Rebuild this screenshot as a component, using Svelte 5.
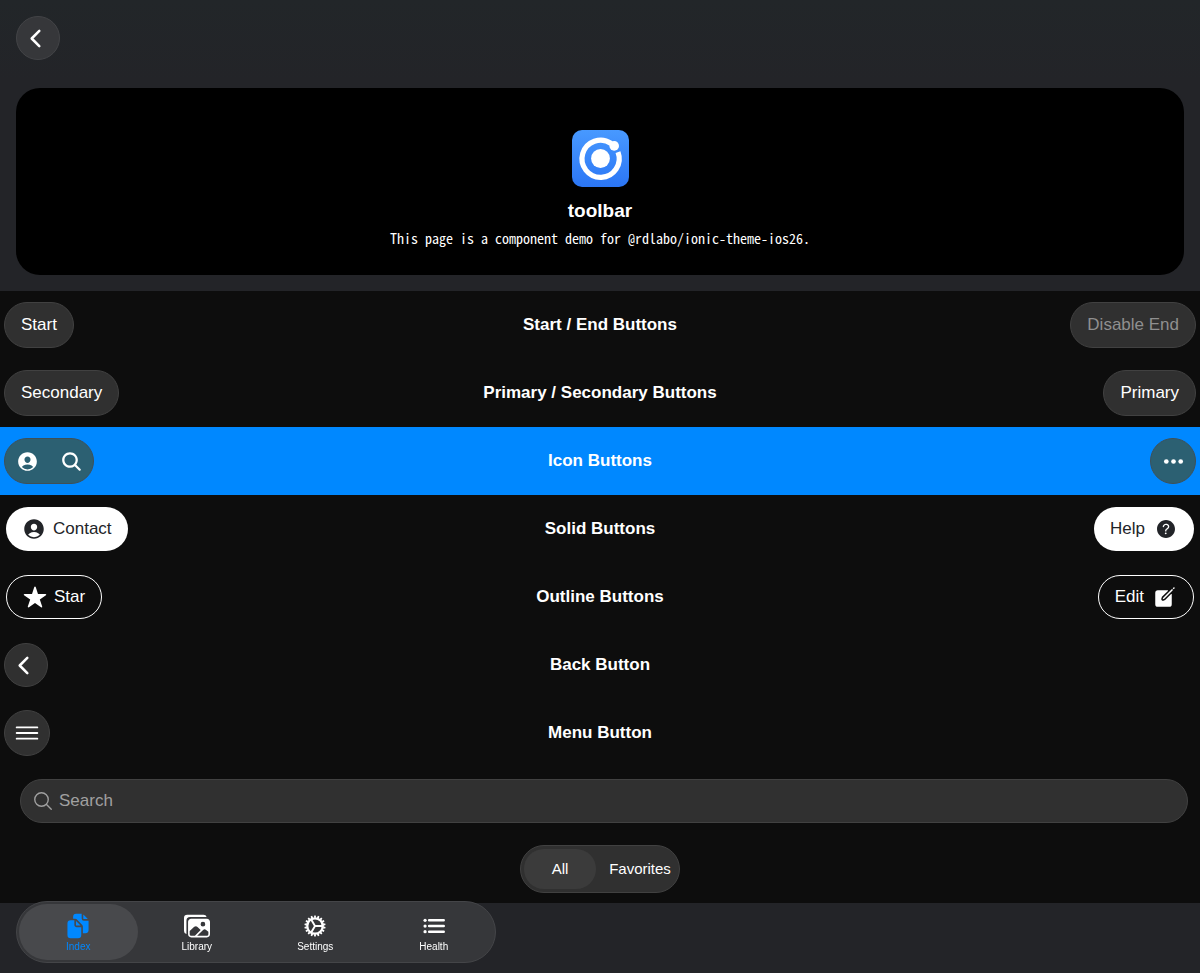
<script>
  let tab = $state('Index');
  let segment = $state('All');
  let query = $state('');

  const tabs = ['Index', 'Library', 'Settings', 'Health'];
  const segments = ['All', 'Favorites'];
  const teeth = Array.from({ length: 18 }, (_, i) => i * 20);
</script>

{#snippet icon(name)}
  <svg class="icon {name}" viewBox="0 0 512 512" aria-hidden="true">
    {#if name === 'back'}
      <path class="line bold" d="M328 112L184 256l144 144" />
    {:else if name === 'person'}
      <path d="M256 48C141.31 48 48 141.31 48 256s93.31 208 208 208 208-93.31 208-208S370.69 48 256 48zm-50.22 116.82C218.45 151.39 236.28 144 256 144s37.39 7.44 50.11 20.94c12.89 13.68 19.16 32.06 17.68 51.82C320.83 256 290.43 288 256 288s-64.89-32-67.79-71.25c-1.47-19.92 4.79-38.36 17.57-51.93zM256 432a175.49 175.49 0 01-126-53.22 122.91 122.91 0 0135.14-33.44C190.63 329 222.89 320 256 320s65.37 9 90.83 25.34A122.87 122.87 0 01382 378.78 175.45 175.45 0 01256 432z" />
    {:else if name === 'search'}
      <path d="M456.69 421.39L362.6 327.3a173.81 173.81 0 0034.84-104.58C397.44 126.38 319.06 48 222.72 48S48 126.38 48 222.72s78.38 174.72 174.72 174.72A173.81 173.81 0 00327.3 362.6l94.09 94.09a25 25 0 0035.3-35.3zM97.92 222.72a124.8 124.8 0 11124.8 124.8 124.95 124.95 0 01-124.8-124.8z" />
    {:else if name === 'search-outline'}
      <path class="line" d="M221.09 64a157.09 157.09 0 10157.09 157.09A157.1 157.1 0 00221.09 64zM338.29 338.29L448 448" />
    {:else if name === 'ellipsis'}
      <circle cx="96" cy="256" r="52" /><circle cx="256" cy="256" r="52" /><circle cx="416" cy="256" r="52" />
    {:else if name === 'help'}
      <path d="M256 64C150 64 64 150 64 256s86 192 192 192 192-86 192-192S362 64 256 64zm-6 304a20 20 0 1120-20 20 20 0 01-20 20zm33.44-102C267.23 276.88 265 286.85 265 296a14 14 0 01-28 0c0-21.91 10.08-39.33 30.82-53.26C287.1 229.8 298 221.6 298 203.57c0-12.26-7-21.57-21.49-28.46-3.41-1.62-11-3.2-20.34-3.09-11.72.15-20.82 2.95-27.83 8.59C215.12 191.25 214 202.83 214 203a14 14 0 11-28-1.35c.11-2.43 1.8-24.32 24.77-42.8 11.91-9.58 27.06-14.56 45-14.78 12.7-.15 24.63 2 32.72 5.82C312.7 161.34 326 180.43 326 203.57c0 33.83-22.61 49.02-42.56 62.43z" />
    {:else if name === 'star'}
      <path d="M394 480a16 16 0 01-9.39-3L256 383.76 127.39 477a16 16 0 01-24.55-18.08L153 310.35 23 221.2a16 16 0 019-29.2h160.38l48.4-148.95a16 16 0 0130.44 0l48.4 149H480a16 16 0 019.05 29.2L359 310.35l50.13 148.53A16 16 0 01394 480z" />
    {:else if name === 'create'}
      <path d="M459.94 53.25a16.06 16.06 0 00-23.22-.56L424.35 65a8 8 0 000 11.31l11.34 11.32a8 8 0 0011.34 0l12.06-12c6.1-6.09 6.67-16.01.85-22.38zM399.34 90L218.82 270.2a9 9 0 00-2.31 3.93L208.16 299a3.91 3.91 0 004.86 4.86l24.85-8.35a9 9 0 003.93-2.31L422 112.66a9 9 0 000-12.66l-9.95-10a9 9 0 00-12.71 0z" />
      <path d="M386.34 193.66L264.45 315.79A41.08 41.08 0 01247.58 326l-25.9 8.67a35.92 35.92 0 01-44.33-44.33l8.67-25.9a41.08 41.08 0 0110.19-16.87l122.13-121.91a8 8 0 00-5.65-13.66H104a56 56 0 00-56 56v240a56 56 0 0056 56h240a56 56 0 0056-56V199.31a8 8 0 00-13.66-5.65z" />
    {:else if name === 'menu'}
      <path class="line" d="M80 160h352M80 256h352M80 352h352" />
    {:else if name === 'Index'}
      <path d="M298.39 248a4 4 0 002.86-6.8l-78.4-79.72a4 4 0 00-6.85 2.81V236a12 12 0 0012 12z" />
      <path d="M197 267a43.67 43.67 0 01-13-31v-92h-72a64.19 64.19 0 00-64 64v224a64 64 0 0064 64h144a64 64 0 0064-64V280h-92a43.61 43.61 0 01-31-13zM372 120h70.39a4 4 0 002.86-6.8l-78.4-79.72a4 4 0 00-6.85 2.81V108a12 12 0 0012 12z" />
      <path d="M372 152a44.34 44.34 0 01-44-44V16H220a60.07 60.07 0 00-60 60v36h42.12A40.81 40.81 0 01231 124.14l109.16 111a41.11 41.11 0 0111.83 29V400h53.05c32.51 0 58.95-26.92 58.95-60V152z" />
    {:else if name === 'Library'}
      <path d="M450.29 112H142c-34 0-62 27.51-62 61.33v245.34c0 33.82 28 61.33 62 61.33h308c34 0 62-26.18 62-60V173.33c0-33.82-27.68-61.33-61.71-61.33zm-77.15 61.34a46 46 0 11-46.28 46 46.19 46.19 0 0146.28-46.01zm-231.55 276c-17 0-29.86-13.75-29.86-30.66v-64.83l90.46-80.79a46.54 46.54 0 0163.44 1.83L328.27 337l-113 112.33zM480 418.67a30.67 30.67 0 01-30.71 30.66H259L376.08 333a46.24 46.24 0 0159.44-.16L480 370.59z" />
      <path d="M384 32H64A64 64 0 000 96v256a64.11 64.11 0 0048 62V152a72 72 0 0172-72h326a64.11 64.11 0 00-62-48z" />
    {:else if name === 'Settings'}
      <circle class="rim" cx="256" cy="256" r="152" />
      {#each teeth as angle}
        <path class="tooth" d="M241 48h30l7 46h-44z" transform="rotate({angle} 256 256)" />
      {/each}
      <path class="spokes" d="M256 256h150M256 256L181 126M256 256L181 386" />
    {:else if name === 'Health'}
      <path class="line bold" d="M160 144h288M160 256h288M160 368h288" />
      <circle cx="80" cy="144" r="32" /><circle cx="80" cy="256" r="32" /><circle cx="80" cy="368" r="32" />
    {/if}
  </svg>
{/snippet}

<div class="page">
  <header>
    <button class="glass round" aria-label="Back">{@render icon('back')}</button>
    <section class="card">
      <svg class="logo" viewBox="0 0 57 57" aria-hidden="true">
        <defs>
          <linearGradient id="logo-fill" x1="0" y1="0" x2="0" y2="1">
            <stop offset="0" stop-color="#4899ff" />
            <stop offset="1" stop-color="#2b76f5" />
          </linearGradient>
        </defs>
        <rect width="57" height="57" rx="10" fill="url(#logo-fill)" />
        <circle cx="28.5" cy="28.5" r="9.4" fill="#fff" />
        <path d="M39.2 13.5A18.6 18.6 0 1 0 46 22.2" fill="none" stroke="#fff" stroke-width="5.2" />
        <circle cx="42.2" cy="15.9" r="4.8" fill="#fff" />
      </svg>
      <h1>toolbar</h1>
      <p>This page is a component demo for @rdlabo/ionic-theme-ios26.</p>
    </section>
  </header>

  <main>
    <div class="toolbar">
      <div class="start"><button class="glass">Start</button></div>
      <h2>Start / End Buttons</h2>
      <div class="end"><button class="glass" disabled>Disable End</button></div>
    </div>
    <div class="toolbar">
      <div class="start"><button class="glass">Secondary</button></div>
      <h2>Primary / Secondary Buttons</h2>
      <div class="end"><button class="glass">Primary</button></div>
    </div>
    <div class="toolbar primary">
      <div class="start">
        <div class="group">
          <button aria-label="Account">{@render icon('person')}</button>
          <button aria-label="Search">{@render icon('search')}</button>
        </div>
      </div>
      <h2>Icon Buttons</h2>
      <div class="end">
        <div class="group"><button aria-label="More">{@render icon('ellipsis')}</button></div>
      </div>
    </div>
    <div class="toolbar">
      <div class="start"><button class="solid">{@render icon('person')}Contact</button></div>
      <h2>Solid Buttons</h2>
      <div class="end"><button class="solid">Help{@render icon('help')}</button></div>
    </div>
    <div class="toolbar">
      <div class="start"><button class="outline">{@render icon('star')}Star</button></div>
      <h2>Outline Buttons</h2>
      <div class="end"><button class="outline">Edit{@render icon('create')}</button></div>
    </div>
    <div class="toolbar">
      <div class="start"><button class="glass round" aria-label="Back">{@render icon('back')}</button></div>
      <h2>Back Button</h2>
    </div>
    <div class="toolbar">
      <div class="start"><button class="glass round menu-button" aria-label="Menu">{@render icon('menu')}</button></div>
      <h2>Menu Button</h2>
    </div>
    <div class="search-row">
      <label class="searchbar">
        {@render icon('search-outline')}
        <input type="search" placeholder="Search" aria-label="Search" bind:value={query} />
      </label>
    </div>
    <div class="segment-row">
      <div class="segment" role="group" aria-label="Filter">
        {#each segments as name}
          <button class:active={segment === name} aria-pressed={segment === name} onclick={() => (segment = name)}>{name}</button>
        {/each}
      </div>
    </div>
  </main>

  <nav aria-label="Tabs">
    {#each tabs as name}
      <button class:active={tab === name} aria-current={tab === name ? 'page' : undefined} onclick={() => (tab = name)}>
        {@render icon(name)}
        <span>{name}</span>
      </button>
    {/each}
  </nav>
</div>

<style>
  :global(body) {
    margin: 0;
    background: #232428;
  }

  .page {
    box-sizing: border-box;
    min-height: 100vh;
    padding-bottom: 70px;
    background: #232428;
    color: #fff;
    font-family: "Liberation Sans", Arial, sans-serif;
    font-size: 17px;
  }

  button {
    box-sizing: border-box;
    display: flex;
    align-items: center;
    justify-content: center;
    margin: 0;
    padding: 0;
    border: 0;
    background: none;
    color: inherit;
    font: inherit;
    cursor: pointer;
  }

  .icon {
    display: block;
    flex: none;
    width: 24px;
    height: 24px;
    fill: currentColor;
  }

  .line,
  .rim,
  .spokes {
    fill: none;
    stroke: currentColor;
    stroke-width: 32;
    stroke-linecap: round;
    stroke-linejoin: round;
  }

  .bold {
    stroke-width: 48;
  }

  .rim {
    stroke-width: 44;
  }

  .spokes {
    stroke-width: 38;
  }

  header {
    display: flex;
    flex-direction: column;
    gap: 28px;
    padding: 16px;
    background: linear-gradient(#222629, #232428 80px);
  }

  .card {
    display: flex;
    flex-direction: column;
    align-items: center;
    padding: 42px 16px 27px;
    border-radius: 24px;
    background: #000;
    text-align: center;
  }

  .logo {
    width: 57px;
    height: 57px;
  }

  h1 {
    margin: 12px 0 5px;
    font-size: 19px;
    line-height: 24px;
  }

  p {
    margin: 0;
    font-family: "Noto Sans Mono CJK JP", "Noto Sans Mono CJK SC", monospace;
    font-size: 14px;
    line-height: 20px;
  }

  main {
    background: #0d0d0d;
  }

  .toolbar {
    box-sizing: border-box;
    display: grid;
    grid-template-columns: 1fr auto 1fr;
    align-items: center;
    min-height: 68px;
    padding: 0 4px;
  }

  .primary {
    background: #0088ff;
  }

  .start,
  .end {
    display: flex;
  }

  .end {
    justify-content: flex-end;
  }

  h2 {
    margin: 0;
    font-size: 17px;
    line-height: 20px;
  }

  .glass {
    height: 46px;
    padding: 0 16px;
    border: 1px solid #414141;
    border-radius: 23px;
    background: #303030;
  }

  .glass:disabled {
    color: #8f8f8f;
    cursor: default;
  }

  .round {
    width: 44px;
    height: 44px;
    padding: 0 6px 0 0;
  }

  .menu-button {
    width: 46px;
    height: 46px;
    padding: 0;
  }

  header .glass {
    border-color: #434447;
    background: #36373a;
  }

  .icon.back {
    width: 27px;
    height: 27px;
  }

  .icon.menu {
    width: 30px;
    height: 30px;
  }

  .group {
    display: flex;
    border: 1px solid #3e5058;
    border-radius: 23px;
    background: #2c6072;
  }

  .group button {
    width: 44px;
    height: 44px;
  }

  .group .icon {
    width: 23px;
    height: 23px;
  }

  .solid,
  .outline {
    gap: 7px;
    height: 44px;
    margin: 0 2px;
    padding: 0 16px;
    border-radius: 22px;
  }

  .end .solid,
  .end .outline {
    gap: 9px;
  }

  .solid {
    background: #fff;
    color: #222428;
  }

  .outline {
    border: 1px solid #fff;
  }

  .search-row {
    padding: 12px 12px 12px 20px;
  }

  .searchbar {
    box-sizing: border-box;
    display: flex;
    align-items: center;
    gap: 5px;
    height: 44px;
    padding: 0 11px;
    border: 1px solid #414141;
    border-radius: 22px;
    background: #303030;
    color: #a0a0a0;
  }

  .searchbar .icon {
    width: 22px;
    height: 22px;
  }

  input {
    flex: 1;
    min-width: 0;
    padding: 0;
    border: 0;
    outline: 0;
    appearance: none;
    background: none;
    color: #fff;
    font: inherit;
  }

  input::placeholder {
    color: #a0a0a0;
    opacity: 1;
  }

  .segment-row {
    display: flex;
    justify-content: center;
    padding: 10px 0;
  }

  .segment {
    display: grid;
    grid-template-columns: 1fr 1fr;
    gap: 8px;
    padding: 3px;
    border: 1px solid #414141;
    border-radius: 24px;
    background: #303030;
    font-size: 15px;
    line-height: 18px;
  }

  .segment button {
    width: 72px;
    height: 40px;
    border-radius: 20px;
  }

  .segment .active {
    background: #3b3b3b;
  }

  /* The tab bar floats over the end of the page. */
  nav {
    position: fixed;
    bottom: 10px;
    left: 16px;
    box-sizing: border-box;
    display: flex;
    width: calc(100% - 32px);
    max-width: 480px;
    padding: 2px;
    border: 1px solid #444548;
    border-radius: 31px;
    background: #36373a;
    font-size: 10px;
    line-height: 12px;
  }

  nav button {
    flex: 1;
    flex-direction: column;
    gap: 2px;
    height: 56px;
    padding-top: 2px;
    border-radius: 28px;
  }

  nav .active {
    background: #48494c;
    color: #0088ff;
  }

  nav .icon {
    width: 26px;
    height: 26px;
  }
</style>
